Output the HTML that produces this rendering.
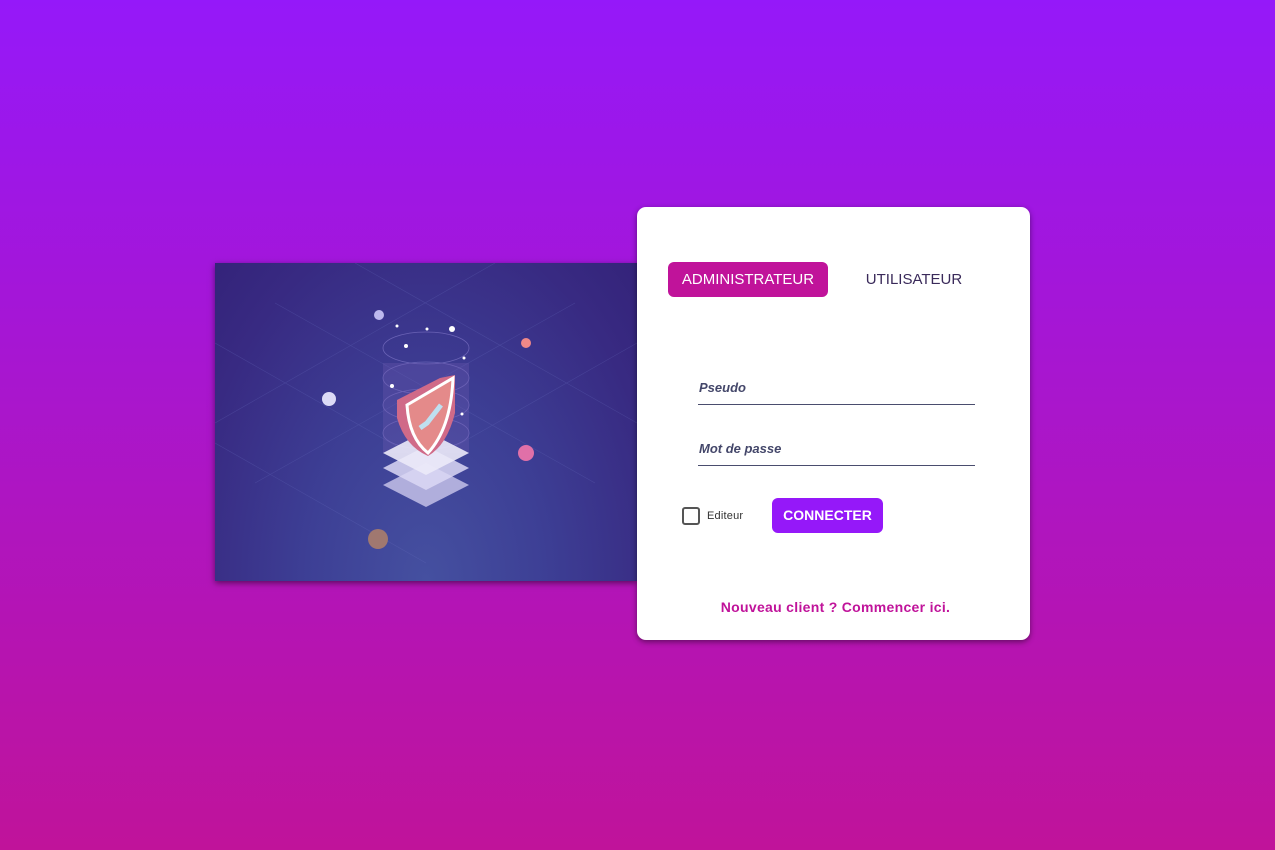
<!DOCTYPE html>
<html><head><style>
html,body{margin:0;width:1275px;height:850px;overflow:hidden;}
body{background:linear-gradient(#9518f9,#c0139a);font-family:"Liberation Sans",sans-serif;position:relative;}
.img{position:absolute;left:215px;top:263px;width:422px;height:318px;background:radial-gradient(ellipse at 50% 100%,#4550a0 0%,#3d3f95 40%,#382a82 80%,#34237a 100%);box-shadow:0 2px 6px rgba(0,0,0,.5);overflow:hidden;}
.card{position:absolute;left:637px;top:207px;width:393px;height:433px;background:#fff;border-radius:9px;box-shadow:0 2px 6px rgba(0,0,0,.45);}
.tab{position:absolute;top:55px;height:35px;line-height:35px;font-size:15px;border-radius:6px;text-align:center;}
.t1{left:31px;width:160px;background:#c0139a;color:#fff;}
.t2{left:215px;width:124px;color:#3a2a5a;}
.lab{position:absolute;left:62px;font-size:13px;font-style:italic;font-weight:bold;color:#44476a;}
.line{position:absolute;left:61px;width:277px;height:1px;background:#4a4d6e;}
.cb{position:absolute;left:45px;top:300px;width:14px;height:14px;border:2px solid #555;border-radius:3px;}
.ed{position:absolute;left:70px;top:303px;font-size:11px;color:#333;letter-spacing:.2px;}
.btn{position:absolute;left:135px;top:291px;width:111px;height:35px;line-height:35px;background:#9518f9;color:#fff;font-weight:bold;font-size:14px;text-align:center;border-radius:6px;}
.new{position:absolute;left:0;width:393px;top:392px;text-align:center;padding-left:2px;font-weight:bold;font-size:14px;color:#c0139a;letter-spacing:.3px;}
</style></head><body>
<div class="img">
<svg width="422" height="318" viewBox="0 0 422 318">
<g stroke="#6a6fc0" stroke-width="0.6" opacity=".3" fill="none">
<path d="M0 80 L211 200 L422 80 M0 180 L211 300 M60 40 L380 220 M360 40 L40 220 M140 0 L422 160 M280 0 L0 160"/>
</g>
<g fill="none" stroke="#8a7fd0" stroke-width="0.8" opacity=".6">
<ellipse cx="211" cy="85" rx="43" ry="16"/><ellipse cx="211" cy="115" rx="43" ry="16"/><ellipse cx="211" cy="142" rx="43" ry="16"/><ellipse cx="211" cy="170" rx="43" ry="16"/>
</g>
<rect x="168" y="100" width="86" height="90" fill="#6a5ab0" opacity=".35"/>
<path d="M168 222 L211 200 L254 222 L211 244Z" fill="#ccc8ec" opacity=".8"/>
<path d="M168 205 L211 183 L254 205 L211 227Z" fill="#dcd8f4" opacity=".85"/>
<path d="M168 190 L211 168 L254 190 L211 212Z" fill="#eceaf8" opacity=".9"/>
<path d="M182 137 L225 115 L240 112 L240 150 Q232 182 213 193 Q190 183 182 155Z" fill="#d06a88"/>
<path d="M192 142 L238 115 Q236 165 213 190 Q194 175 192 142Z" fill="#e48a8a" stroke="#fff" stroke-width="3"/>
<path d="M205 165 L212 160 L226 142" stroke="#bfe0f0" stroke-width="5" fill="none"/>
<circle cx="164" cy="52" r="5" fill="#bdb8ee"/><circle cx="114" cy="136" r="7" fill="#dcdaf6"/>
<circle cx="311" cy="80" r="5" fill="#f08888"/><circle cx="311" cy="190" r="8" fill="#e070a8"/>
<circle cx="163" cy="276" r="10" fill="#a07870"/>
<g fill="#fff"><circle cx="237" cy="66" r="3"/><circle cx="212" cy="66" r="1.5"/><circle cx="182" cy="63" r="1.5"/><circle cx="191" cy="83" r="2"/><circle cx="249" cy="95" r="1.5"/><circle cx="177" cy="123" r="2"/><circle cx="247" cy="151" r="1.5"/></g>
</svg>
</div>
<div class="card">
<div class="tab t1">ADMINISTRATEUR</div>
<div class="tab t2">UTILISATEUR</div>
<div class="lab" style="top:173px">Pseudo</div><div class="line" style="top:197px"></div>
<div class="lab" style="top:234px">Mot de passe</div><div class="line" style="top:258px"></div>
<div class="cb"></div><div class="ed">Editeur</div>
<div class="btn">CONNECTER</div>
<div class="new">Nouveau client ? Commencer ici.</div>
</div>
</body></html>
